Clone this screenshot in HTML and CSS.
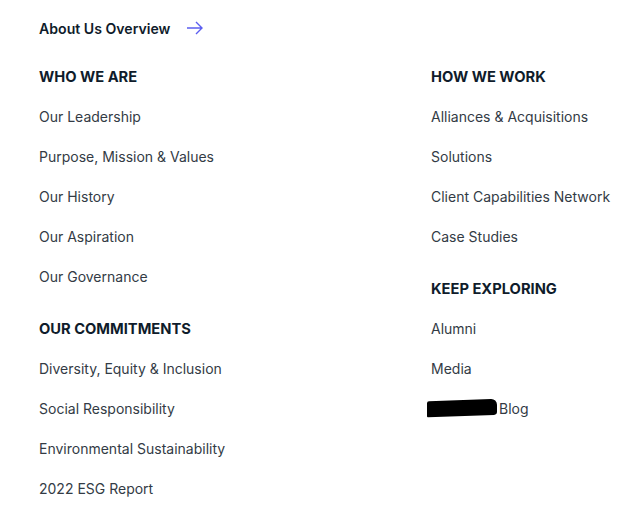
FILE: index.html
```html
<!DOCTYPE html>
<html>
<head>
<meta charset="utf-8">
<link rel="stylesheet" href="styles.css">
</head>
<body>
<div class="menu">
  <a class="overview" href="#">About Us Overview
    <svg class="arrow" width="18" height="14" viewBox="0 0 18 14"><path d="M1 7H16M10 1L16 7L10 13" fill="none" stroke="#5b5ef0" stroke-width="1.4"/></svg>
  </a>
  <div class="cols">
    <div class="col">
      <div class="group">
        <h3 class="head">WHO WE ARE</h3>
        <a class="item" href="#">Our Leadership</a>
        <a class="item" href="#">Purpose, Mission &amp; Values</a>
        <a class="item" href="#">Our History</a>
        <a class="item" href="#">Our Aspiration</a>
        <a class="item" href="#">Our Governance</a>
      </div>
      <div class="group">
        <h3 class="head">OUR COMMITMENTS</h3>
        <a class="item" href="#">Diversity, Equity &amp; Inclusion</a>
        <a class="item" href="#">Social Responsibility</a>
        <a class="item" href="#">Environmental Sustainability</a>
        <a class="item" href="#">2022 ESG Report</a>
      </div>
    </div>
    <div class="col col-right">
      <div class="group">
        <h3 class="head">HOW WE WORK</h3>
        <a class="item" href="#">Alliances &amp; Acquisitions</a>
        <a class="item" href="#">Solutions</a>
        <a class="item" href="#">Client Capabilities Network</a>
        <a class="item" href="#">Case Studies</a>
      </div>
      <div class="group">
        <h3 class="head">KEEP EXPLORING</h3>
        <a class="item" href="#">Alumni</a>
        <a class="item" href="#">Media</a>
        <a class="item" href="#"><span class="redact"></span>Blog</a>
      </div>
    </div>
  </div>
</div>
</body>
</html>
```
FILE: styles.css
```css
html, body { margin: 0; padding: 0; background: #fff; }
body { font-family: Inter, "Open Sans", sans-serif; }
.menu { padding: 8px 0 0 39px; }
.overview {
  display: flex; align-items: center; height: 40px; margin-bottom: 8px;
  font-size: 14.1px; font-weight: 600; color: #0f1c2b; text-decoration: none;
}
.arrow { margin-left: 16px; }
.cols { display: flex; }
.col { width: 392px; flex-shrink: 0; display: flex; flex-direction: column; gap: 12px; }
.col-right { width: auto; flex: 1; min-width: 0; }
.group { display: flex; flex-direction: column; }
.head {
  margin: 0; height: 40px; line-height: 42px;
  font-size: 14.7px; font-weight: 700; color: #0f1c2b;
}
.item {
  display: flex; align-items: center; height: 40px;
  font-size: 14px; color: #333b45; text-decoration: none; white-space: nowrap;
}
.redact {
  display: inline-block; width: 70px; height: 16px; background: #000;
  margin-left: -4px; margin-right: 2px; border-radius: 2px 6px 3px 1px;
  transform: skewY(-2deg);
}
```
